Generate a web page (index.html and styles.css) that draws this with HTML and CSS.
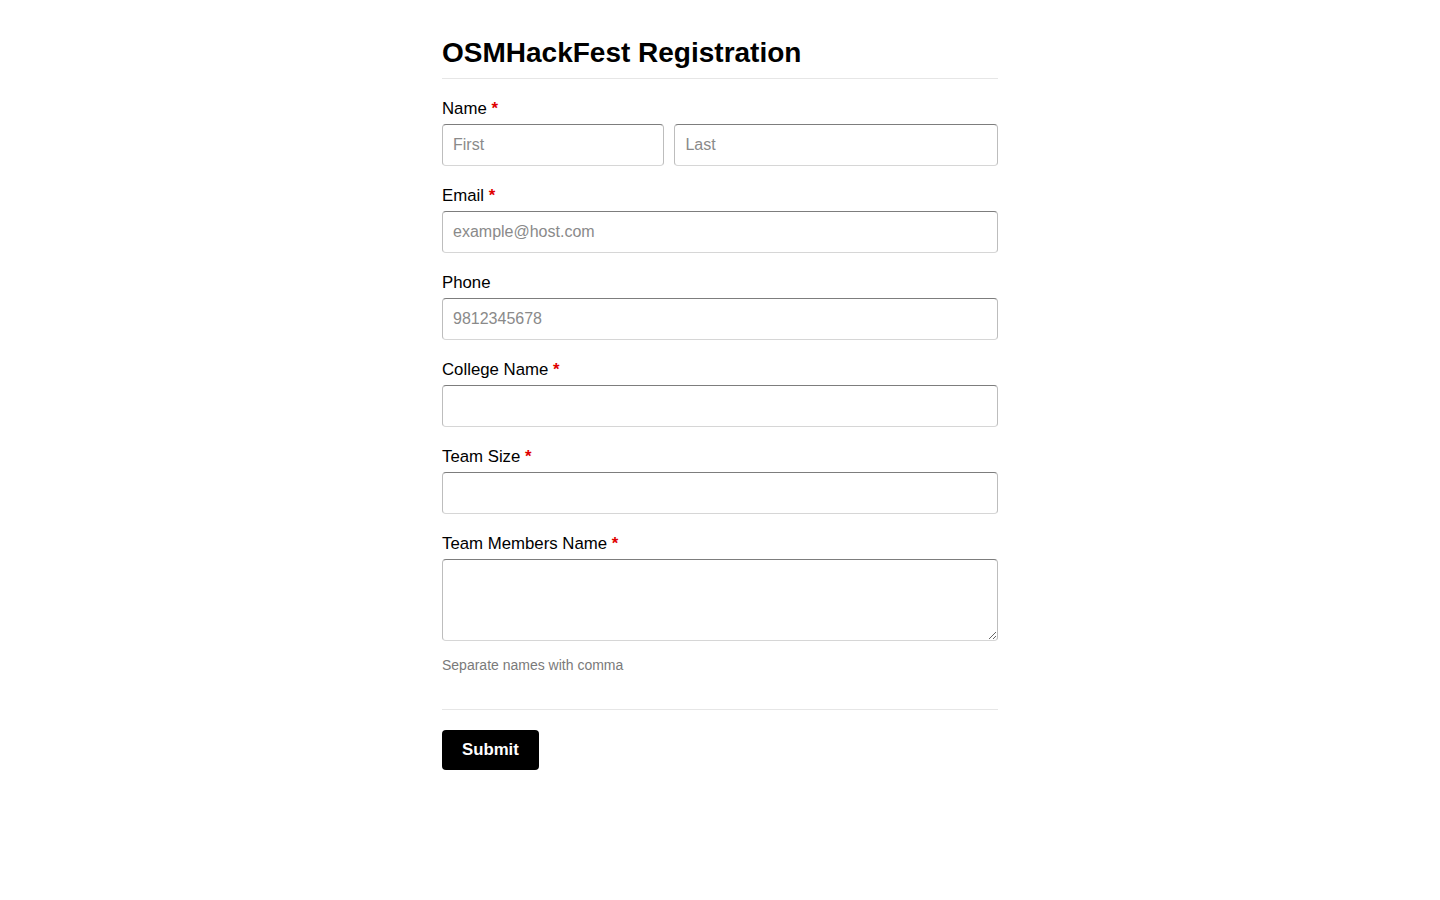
FILE: index.html
```html
<!DOCTYPE html>
<html lang="en">
<head>
<meta charset="utf-8">
<title>OSMHackFest Registration</title>
<link rel="stylesheet" href="styles.css">
</head>
<body>
<form class="form">
  <h1 class="title">OSMHackFest Registration</h1>

  <div class="field">
    <label class="label">Name <span class="req">*</span></label>
    <div class="name-row">
      <input class="input first" type="text" placeholder="First">
      <input class="input last" type="text" placeholder="Last">
    </div>
  </div>

  <div class="field">
    <label class="label">Email <span class="req">*</span></label>
    <input class="input" type="email" placeholder="example@host.com">
  </div>

  <div class="field">
    <label class="label">Phone</label>
    <input class="input" type="tel" placeholder="9812345678">
  </div>

  <div class="field">
    <label class="label">College Name <span class="req">*</span></label>
    <input class="input" type="text">
  </div>

  <div class="field">
    <label class="label">Team Size <span class="req">*</span></label>
    <input class="input" type="text">
  </div>

  <div class="field field-last">
    <label class="label">Team Members Name <span class="req">*</span></label>
    <textarea class="input textarea"></textarea>
    <p class="help">Separate names with comma</p>
  </div>

  <div class="actions">
    <button class="submit" type="button">Submit</button>
  </div>
</form>
</body>
</html>
```
FILE: styles.css
```css
* { box-sizing: border-box; }

html, body {
  margin: 0;
  padding: 0;
  background: #fff;
  color: #000;
  font-family: "Liberation Sans", Arial, sans-serif;
}

.form {
  width: 556px;
  margin: 0 auto;
  padding-top: 36px;
}

.title {
  margin: 0 0 19px;
  padding-bottom: 8px;
  font-size: 28px;
  line-height: 34px;
  font-weight: bold;
  border-bottom: 1px solid #e6e6e6;
}

.field {
  margin-bottom: 19px;
}

.label {
  display: block;
  font-size: 16.8px;
  line-height: 22px;
  margin-bottom: 4px;
}

.req {
  color: #e00000;
  font-weight: bold;
}

.name-row {
  display: flex;
  gap: 10px;
}

.input {
  display: block;
  width: 100%;
  height: 42px;
  padding: 0 10px;
  font-family: "Liberation Sans", Arial, sans-serif;
  font-size: 16px;
  color: #000;
  background: #fff;
  border: 1px solid;
  border-color: #7d7d7d #bdbdbd #d6d6d6 #bdbdbd;
  border-radius: 4px;
  outline: none;
}

.input::placeholder {
  color: #8a8a8a;
}

.first {
  flex: 0 0 40%;
  width: 40%;
}

.last {
  flex: 1 1 auto;
  width: auto;
}

.textarea {
  height: 82px;
  padding: 10px;
  resize: vertical;
}

.field-last {
  margin-bottom: 0;
}

.help {
  margin: 16px 0 0;
  font-size: 14px;
  line-height: 16px;
  color: #7a7a7a;
}

.actions {
  margin-top: 36px;
  padding-top: 20px;
  border-top: 1px solid #e6e6e6;
}

.submit {
  display: block;
  height: 40px;
  padding: 0 20px;
  background: #000;
  color: #fff;
  border: none;
  border-radius: 4px;
  font-family: "Liberation Sans", Arial, sans-serif;
  font-size: 16.8px;
  font-weight: bold;
  cursor: pointer;
}
```
